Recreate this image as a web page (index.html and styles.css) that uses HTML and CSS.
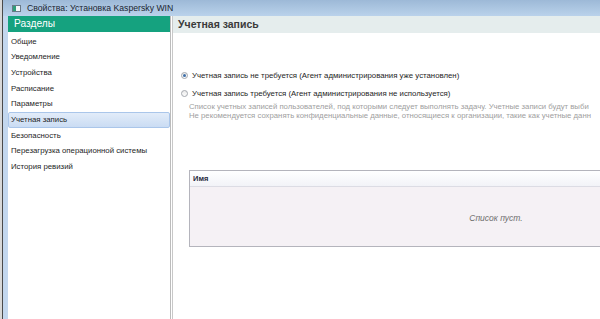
FILE: index.html
```html
<!DOCTYPE html>
<html lang="ru">
<head>
  <meta charset="UTF-8">
  <title>Свойства: Установка Kaspersky WIN</title>
  <link rel="stylesheet" href="styles.css">
</head>
<body>

<div class="desk-edge"></div>

<div class="window">
  <div class="titlebar">
    <svg class="app-icon" width="9" height="7" viewBox="0 0 9 7">
      <rect x="0.5" y="0.5" width="8" height="6" fill="#f4f6f8" stroke="#6a7a88"/>
      <rect x="1" y="1" width="3" height="5" fill="#2f9e7a"/>
    </svg>
    <span class="title">Свойства: Установка Kaspersky WIN</span>
  </div>

  <div class="frame">
    <div class="sidebar">
      <div class="sidebar-head">Разделы</div>
      <ul class="sections">
        <li>Общие</li>
        <li>Уведомление</li>
        <li>Устройства</li>
        <li>Расписание</li>
        <li>Параметры</li>
        <li class="selected">Учетная запись</li>
        <li>Безопасность</li>
        <li>Перезагрузка операционной системы</li>
        <li>История ревизий</li>
      </ul>
    </div>

    <div class="content">
      <div class="content-head">Учетная запись</div>

      <div class="options">
        <label class="radio">
          <span class="dot checked"></span>
          Учетная запись не требуется (Агент администрирования уже установлен)
        </label>
        <label class="radio">
          <span class="dot"></span>
          Учетная запись требуется (Агент администрирования не используется)
        </label>
        <p class="hint">
          Список учетных записей пользователей, под которыми следует выполнять задачу. Учетные записи будут выби<br>
          Не рекомендуется сохранять конфиденциальные данные, относящиеся к организации, такие как учетные данн
        </p>
      </div>

      <div class="list">
        <div class="list-head">Имя</div>
        <div class="list-body">Список пуст.</div>
      </div>
    </div>
  </div>
</div>

</body>
</html>
```

FILE: styles.css
```css
body {
  margin: 0;
  width: 600px;
  height: 319px;
  overflow: hidden;
  display: flex;
  font-family: 'Liberation Sans', Arial, sans-serif;
  font-size: 7.8px;
  color: #1e1e1e;
  background: #fff;
}
.desk-edge {
  width: 2px;
  flex-shrink: 0;
  background: #d8d8d8;
  border-right: 1px solid #4a4a4a;
}
.window {
  flex: 1;
  display: flex;
  flex-direction: column;
  background: #c3d7ee;
  padding-left: 5px;
  min-width: 0;
}
.titlebar {
  height: 16px;
  display: flex;
  align-items: center;
  background: linear-gradient(to bottom, #9db9d7, #bad2eb);
  margin-left: -5px;
  padding-left: 9px;
  flex-shrink: 0;
}
.app-icon {
  margin-right: 6px;
}
.title {
  font-size: 8.7px;
  color: #1b2530;
}
.frame {
  flex: 1;
  display: flex;
  background: #fff;
  min-height: 0;
}
.sidebar {
  width: 162px;
  flex-shrink: 0;
  border-right: 1px solid #bcbcbc;
  background: #fff;
}
.sidebar-head {
  height: 16px;
  line-height: 16px;
  background: #15a27f;
  color: #fff;
  font-size: 10.2px;
  padding-left: 6px;
}
.sections {
  list-style: none;
  margin: 0;
  padding: 1.5px 0 0 0;
}
.sections li {
  height: 15.7px;
  line-height: 15.7px;
  padding-left: 3px;
  box-sizing: border-box;
}
.sections li.selected {
  background: linear-gradient(to bottom, #e2ecf9, #cadcf3);
  border: 1px solid #aac6ea;
  border-radius: 2px;
  line-height: 13.7px;
  padding-left: 2px;
}
.content {
  flex: 1;
  min-width: 0;
  margin-left: 1px;
  border-left: 1px solid #c8c8c8;
  overflow: hidden;
}
.content-head {
  height: 17px;
  line-height: 17px;
  background: #e5eded;
  color: #3a3a3a;
  font-weight: bold;
  font-size: 10.5px;
  padding-left: 5px;
}
.options {
  padding: 38px 0 0 8px;
}
.radio {
  display: flex;
  align-items: center;
  height: 9px;
  margin-bottom: 9px;
  white-space: nowrap;
}
.dot {
  width: 7px;
  height: 7px;
  border-radius: 50%;
  border: 1px solid #a4a8ae;
  background: linear-gradient(to bottom, #eaeaea, #fcfcfc);
  box-sizing: border-box;
  margin-right: 4px;
  position: relative;
}
.dot.checked::after {
  content: "";
  position: absolute;
  left: 1px;
  top: 1px;
  width: 3px;
  height: 3px;
  border-radius: 50%;
  background: #3e6fa8;
}
.hint {
  margin: -5px 0 0 8px;
  color: #a0a0a0;
  font-size: 7.75px;
  line-height: 9px;
  white-space: nowrap;
}
.list {
  margin: 50px 0 0 16px;
  width: 612px;
  border: 1px solid #b4b4bc;
  border-right: none;
  background: #f5f1f5;
}
.list-head {
  height: 15px;
  line-height: 15px;
  padding-left: 3px;
  font-weight: bold;
  font-size: 7.5px;
  color: #2a2a40;
  background: linear-gradient(to bottom, #ffffff, #f2f3f8);
  border-bottom: 1px solid #dcdce4;
}
.list-body {
  height: 59px;
  display: flex;
  align-items: center;
  justify-content: center;
  font-style: italic;
  color: #6e6e6e;
  font-size: 8.5px;
  padding-top: 3px;
  box-sizing: border-box;
}
```
